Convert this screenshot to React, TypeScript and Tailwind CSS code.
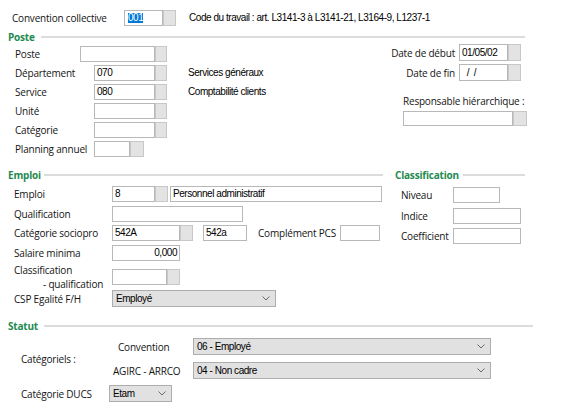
import React from "react";

const LBL = "font-['Open_Sans',sans-serif] text-[10px] tracking-[-0.2px] text-[#141414] leading-[14px] whitespace-nowrap";
const VAL = "font-['Liberation_Sans',Arial,sans-serif] text-[10px] tracking-[-0.45px] text-black leading-[14px] whitespace-pre";
const HDR = "font-['Open_Sans',sans-serif] text-[10px] font-bold tracking-[-0.2px] text-[#1f8a50] leading-[12px]";

function Field({ w, h = 16, value, right, selected }: { w: number; h?: number; value?: string; right?: boolean; selected?: boolean }) {
  return (
    <div
      className={`bg-white border border-[#b8b8b8] flex items-center px-[2px] ${right ? "justify-end" : ""} ${VAL}`}
      style={{ width: w, height: h }}
    >
      {selected ? <span className="bg-[#0078d7] text-white leading-[10px] ml-[1px]">{value}</span> : value}
    </div>
  );
}

function Btn({ w = 13, h = 16 }: { w?: number; h?: number }) {
  return <div className="bg-[#e3e3e3] border border-[#c8c8c8]" style={{ width: w, height: h }} />;
}

function Select({ w, value }: { w: number; value: string }) {
  return (
    <div
      className={`bg-[#e1e1e1] border border-[#adadad] h-[17px] flex items-center justify-between pl-[3px] pr-[5px] ${VAL}`}
      style={{ width: w }}
    >
      <span>{value}</span>
      <svg width="8" height="5" viewBox="0 0 8 5">
        <polyline points="0.5,0.5 4,4 7.5,0.5" fill="none" stroke="#6b6b6b" strokeWidth="1" />
      </svg>
    </div>
  );
}

function Header({ title, lineMl, pr }: { title: string; lineMl: number; pr: number }) {
  return (
    <div className="flex items-center h-[12px] pl-[8px]" style={{ paddingRight: pr }}>
      <span className={HDR}>{title}</span>
      <div className="flex-1 h-[1.5px] bg-[#dcdcdc]" style={{ marginLeft: lineMl }} />
    </div>
  );
}

export default function App() {
  return (
    <div className="w-[576px] h-[412px] bg-white overflow-hidden pt-[10px]">
      {/* Convention collective */}
      <div className="flex items-center h-[16px] pl-[12px]">
        <span className={`${LBL} w-[112px]`}>Convention collective</span>
        <Field w={39} value="001" selected />
        <Btn />
        <span className={`${VAL} ml-[13px]`}>Code du travail : art. L3141-3 à L3141-21, L3164-9, L1237-1</span>
      </div>

      {/* Poste */}
      <div className="mt-[5px]">
        <Header title="Poste" lineMl={6} pr={51} />
      </div>
      <div className="flex mt-[1px]">
        <div className="w-[383px] pt-[2px] pl-[15px] flex flex-col gap-[3px]">
          <div className="flex items-center h-[16px]">
            <span className={`${LBL} w-[65px]`}>Poste</span>
            <Field w={75} />
            <Btn w={12} />
          </div>
          <div className="flex items-center h-[16px]">
            <span className={`${LBL} w-[79px]`}>Département</span>
            <Field w={61} value="070" />
            <Btn w={12} />
            <span className={`${VAL} ml-[21px]`}>Services généraux</span>
          </div>
          <div className="flex items-center h-[16px]">
            <span className={`${LBL} w-[79px]`}>Service</span>
            <Field w={61} value="080" />
            <Btn w={12} />
            <span className={`${VAL} ml-[21px]`}>Comptabilité clients</span>
          </div>
          <div className="flex items-center h-[16px]">
            <span className={`${LBL} w-[79px]`}>Unité</span>
            <Field w={61} />
            <Btn w={12} />
          </div>
          <div className="flex items-center h-[16px]">
            <span className={`${LBL} w-[79px]`}>Catégorie</span>
            <Field w={61} />
            <Btn w={12} />
          </div>
          <div className="flex items-center h-[16px]">
            <span className={`${LBL} w-[79px]`}>Planning annuel</span>
            <Field w={36} />
            <Btn w={14} />
          </div>
        </div>
        <div className="w-[144px] flex flex-col">
          <div className="flex items-center h-[17px] pr-[6px] gap-[4px]">
            <span className={`${LBL} flex-1 text-right`}>Date de début</span>
            <div className="flex">
              <Field w={49} h={17} value="01/05/02" />
              <Btn h={17} />
            </div>
          </div>
          <div className="flex items-center h-[17px] pr-[6px] gap-[4px] mt-[3px]">
            <span className={`${LBL} flex-1 text-right`}>Date de fin</span>
            <div className="flex">
              <Field w={49} h={17} value="  /  /" />
              <Btn h={17} />
            </div>
          </div>
          <div className={`${LBL} pl-[20px] mt-[13px]`}>Responsable hiérarchique :</div>
          <div className="flex pl-[20px] mt-[3px]">
            <Field w={110} h={15} />
            <Btn w={14} h={15} />
          </div>
        </div>
      </div>

      {/* Emploi / Classification headers */}
      <div className="flex mt-[12px]">
        <div className="w-[383px]">
          <Header title="Emploi" lineMl={3} pr={0} />
        </div>
        <div className="w-[144px] flex items-center h-[12px] pl-[12px] pr-[2px]">
          <span className={HDR}>Classification</span>
          <div className="flex-1 h-[1.5px] bg-[#dcdcdc] ml-[4px]" />
        </div>
      </div>

      <div className="flex">
        <div className="w-[383px] pl-[14px] pt-[5px] flex flex-col">
          <div className="flex items-center h-[16px]">
            <span className={`${LBL} w-[98px]`}>Emploi</span>
            <Field w={43} value="8" />
            <Btn />
            <div className="ml-[2px]">
              <Field w={212} value="Personnel administratif" />
            </div>
          </div>
          <div className="flex items-center h-[16px] mt-[4px]">
            <span className={`${LBL} w-[98px]`}>Qualification</span>
            <Field w={131} />
          </div>
          <div className="flex items-center h-[16px] mt-[3px]">
            <span className={`${LBL} w-[98px]`}>Catégorie sociopro</span>
            <Field w={68} value="542A" />
            <Btn />
            <div className="ml-[10px]">
              <Field w={44} value="542a" />
            </div>
            <span className={`${LBL} w-[82px] ml-[11px]`}>Complément PCS</span>
            <Field w={40} />
          </div>
          <div className="flex items-center h-[16px] mt-[4px]">
            <span className={`${LBL} w-[98px]`}>Salaire minima</span>
            <Field w={68} value="0,000" right />
          </div>
          <div className="flex items-center h-[26px] mt-[3px]">
            <div className={`${LBL} w-[98px] leading-[13px]`}>
              <div>Classification</div>
              <div className="pl-[29px]">- qualification</div>
            </div>
            <Field w={55} />
            <Btn />
          </div>
          <div className="flex items-center h-[17px]">
            <span className={`${LBL} w-[98px]`}>CSP Egalité F/H</span>
            <Select w={164} value="Employé" />
          </div>
        </div>
        <div className="w-[144px] pl-[18px] pt-[6px] flex flex-col">
          <div className="flex items-center h-[16px]">
            <span className={`${LBL} w-[52px]`}>Niveau</span>
            <Field w={47} />
          </div>
          <div className="flex items-center h-[16px] mt-[5px]">
            <span className={`${LBL} w-[52px]`}>Indice</span>
            <Field w={68} />
          </div>
          <div className="flex items-center h-[16px] mt-[4px]">
            <span className={`${LBL} w-[52px]`}>Coefficient</span>
            <Field w={68} />
          </div>
        </div>
      </div>

      {/* Statut */}
      <div className="mt-[13px]">
        <Header title="Statut" lineMl={6} pr={43} />
      </div>
      <div className="pt-[6px]">
        <div className="flex items-center">
          <span className={`${LBL} w-[113px] pl-[21px]`}>Catégoriels :</span>
          <div className="flex flex-col gap-[7px]">
            <div className="flex items-center">
              <span className={`${LBL} w-[80px] pl-[5px]`}>Convention</span>
              <Select w={298} value="06 - Employé" />
            </div>
            <div className="flex items-center">
              <span className={`${LBL} w-[80px]`}>AGIRC - ARRCO</span>
              <Select w={298} value="04 - Non cadre" />
            </div>
          </div>
        </div>
        <div className="flex items-center mt-[6px]">
          <span className={`${LBL} w-[109px] pl-[21px]`}>Catégorie DUCS</span>
          <Select w={63} value="Etam" />
        </div>
      </div>
    </div>
  );
}
